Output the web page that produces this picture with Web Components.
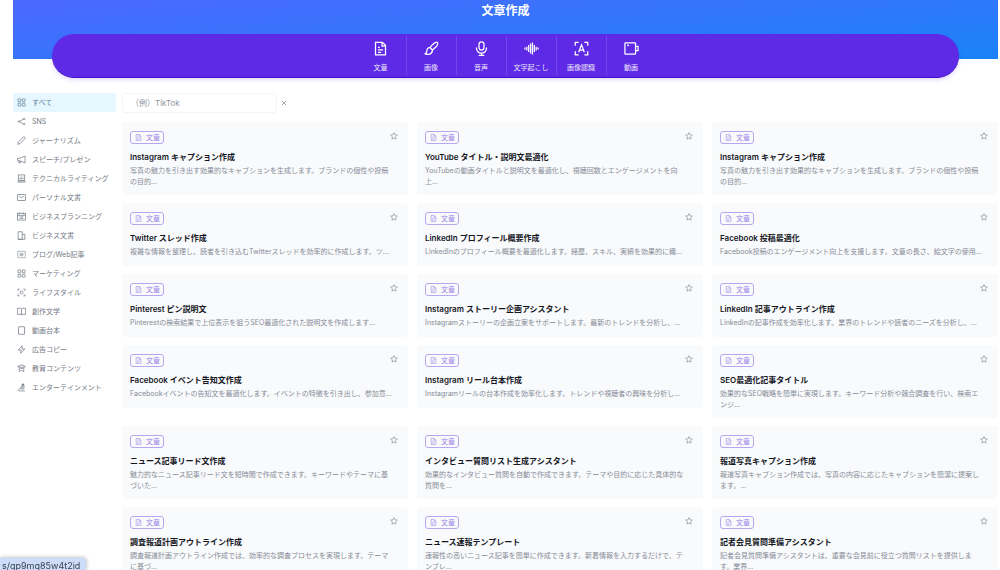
<!DOCTYPE html>
<html lang="ja">
<head>
<meta charset="utf-8">
<meta name="viewport" content="width=device-width, initial-scale=1">
<title>文章作成</title>
<style>
  html { scrollbar-width: none; background: #fff; }
  body { margin: 0; font-family: Inter, "Noto Sans CJK JP", sans-serif; font-size: 7px; line-height: 11px; color: #1c1f2b; }
</style>
</head>
<body>
<template-app></template-app>

<script>
const ICONS = {
  doc: '<path d="M4 2h11l5 5v15H4z"/><path d="M14.500 2v6H20M8 10h3M8 14h8M8 18h5"/>',
  brush: '<path d="M21.500 2.500c-1.500-1.500-5 .5-7.500 3l-4.500 5 4 4 5-4.500c2.500-2.500 4.500-6 3-7.500z"/><path d="M9.500 10.500C6 10.500 4.500 13 4.500 16c0 2-1 3.500-2.500 4.500 4 1.500 11.500 1.500 11.500-6"/>',
  mic: '<rect x="8" y="1.500" width="8" height="13" rx="4"/><path d="M4 10.500v1a8 8 0 0 0 16 0v-1M12 19.500V23M7.500 23h9"/>',
  wave: '<path d="M1.500 10.500v3M4.500 9v6M7.500 6.500v11M10.500 4v16M13.500 2.500v19M16.500 6.500v11M19.500 9v6M22.500 10.500v3"/>',
  scan: '<path d="M2 7.500V2h5.500M16.500 2H22v5.500M22 16.500V22h-5.500M7.500 22H2v-5.500M7.500 18L12 6l4.500 12M9 14.500h6"/>',
  video: '<rect x="1.500" y="3" width="17" height="18" rx="1"/><path d="M18.500 8.500h4v7h-4M5 7h3"/>',
  grid: '<rect x="2.500" y="2.500" width="7.500" height="7.500" rx="1"/><rect x="14" y="2.500" width="7.500" height="7.500" rx="1"/><rect x="2.500" y="14" width="7.500" height="7.500" rx="1"/><rect x="14" y="14" width="7.500" height="7.500" rx="1"/>',
  share: '<circle cx="5" cy="12" r="2"/><circle cx="19" cy="5" r="2"/><circle cx="19" cy="19" r="2"/><path d="M7 11L17 6M7 13l10 5"/>',
  pencil: '<path d="M2 22l1.500-6L17 2.500c2-1.500 6 2 4.500 4.500L8 20.500z"/>',
  horn: '<path d="M1.500 8.500H8L21.500 3v18L8 15.500H1.500zM5 15.500V21h4v-5"/>',
  laptop: '<rect x="3.500" y="2.500" width="17" height="14"/><path d="M1 21.500h22M2 18.500h20M8 7v2M12 7v2M16 7v2M7 12h10"/>',
  mail: '<rect x="1.500" y="4" width="21" height="16" rx="1"/><path d="M6 8.500l6 4.500 6-4.500"/>',
  calendar: '<rect x="1.500" y="3.500" width="21" height="18"/><path d="M1.500 9h21M7 1v5M17 1v5M7 13h10M7 17h10"/>',
  building: '<path d="M3 22V2h11v20zM14 9h7v13H3"/>',
  news: '<path d="M2 3.500h20v17H2z" opacity=".7"/><path d="M7 9h10M7 12h10M7 15h10" stroke-width="1.500"/>',
  focus: '<path d="M2.500 7.500V3H7M17 3h4.500v4.500M21.500 16.500V21H17M7 21H2.500v-4.500"/><circle cx="12" cy="12" r="4"/>',
  book: '<path d="M1 3.500h9l2 1.500 2-1.500h9v16h-9L12 21l-2-1.500H1zM12 5v16"/>',
  page: '<rect x="4" y="2" width="16" height="20" rx="1"/>',
  bolt: '<path d="M14 2L3.500 13.500H11L9.500 22 21 10.500h-7.500z"/>',
  school: '<path d="M1.500 6.500L12 2.500l10.500 4-3.500 2H5zM6 9v11l6-3 6 3V9M8.500 12h7"/>',
  fun: '<path d="M2 21l9-9M5 21h16M15 4v9M10 12l5-8 4 3-1 9-8-1z"/><circle cx="16" cy="4" r="2" fill="currentColor"/>',
  star: '<path d="M12 2l3 6.500 7 .8-5.200 4.900 1.400 7.100L12 17.800l-6.200 3.500 1.400-7.100L2 9.300l7-.8z"/>',
  close: '<path d="M3 3l18 18M21 3L3 21"/>'
};

const TOOLS = [
  ['doc', '文章'], ['brush', '画像'], ['mic', '音声'],
  ['wave', '文字起こし'], ['scan', '画像認識'], ['video', '動画']
];

const CATEGORIES = [
  ['grid', 'すべて'], ['share', 'SNS'], ['pencil', 'ジャーナリズム'], ['horn', 'スピーチ/プレゼン'],
  ['laptop', 'テクニカルライティング'], ['mail', 'パーソナル文書'], ['calendar', 'ビジネスプランニング'],
  ['building', 'ビジネス文書'], ['news', 'ブログ/Web記事'], ['grid', 'マーケティング'],
  ['focus', 'ライフスタイル'], ['book', '創作文学'], ['page', '動画台本'],
  ['bolt', '広告コピー'], ['school', '教育コンテンツ'], ['fun', 'エンターテインメント']
];

const TEMPLATES = [
  ['Instagram キャプション作成', '写真の魅力を引き出す効果的なキャプションを生成します。ブランドの個性や投稿の目的...'],
  ['YouTube タイトル・説明文最適化', 'YouTubeの動画タイトルと説明文を最適化し、視聴回数とエンゲージメントを向上...'],
  ['Instagram キャプション作成', '写真の魅力を引き出す効果的なキャプションを生成します。ブランドの個性や投稿の目的...'],
  ['Twitter スレッド作成', '複雑な情報を整理し、読者を引き込むTwitterスレッドを効率的に作成します。ツ...'],
  ['LinkedIn プロフィール概要作成', 'LinkedInのプロフィール概要を最適化します。経歴、スキル、実績を効果的に織...'],
  ['Facebook 投稿最適化', 'Facebook投稿のエンゲージメント向上を支援します。文章の長さ、絵文字の使用...'],
  ['Pinterest ピン説明文', 'Pinterestの検索結果で上位表示を狙うSEO最適化された説明文を作成します...'],
  ['Instagram ストーリー企画アシスタント', 'Instagramストーリーの企画立案をサポートします。最新のトレンドを分析し、...'],
  ['LinkedIn 記事アウトライン作成', 'LinkedInの記事作成を効率化します。業界のトレンドや読者のニーズを分析し、...'],
  ['Facebook イベント告知文作成', 'Facebookイベントの告知文を最適化します。イベントの特徴を引き出し、参加意...'],
  ['Instagram リール台本作成', 'Instagramリールの台本作成を効率化します。トレンドや視聴者の興味を分析し...'],
  ['SEO最適化記事タイトル', '効果的なSEO戦略を簡単に実現します。キーワード分析や競合調査を行い、検索エンジ...'],
  ['ニュース記事リード文作成', '魅力的なニュース記事リード文を短時間で作成できます。キーワードやテーマに基づいた...'],
  ['インタビュー質問リスト生成アシスタント', '効果的なインタビュー質問を自動で作成できます。テーマや目的に応じた具体的な質問を...'],
  ['報道写真キャプション作成', '報道写真キャプション作成では、写真の内容に応じたキャプションを簡潔に提案します。...'],
  ['調査報道計画アウトライン作成', '調査報道計画アウトライン作成では、効率的な調査プロセスを実現します。テーマに基づ...'],
  ['ニュース速報テンプレート', '速報性の高いニュース記事を簡単に作成できます。新着情報を入力するだけで、テンプレ...'],
  ['記者会見質問準備アシスタント', '記者会見質問準備アシスタントは、重要な会見前に役立つ質問リストを提供します。業界...']
];

function define(name, render) {
  customElements.define(name, class extends HTMLElement {
    connectedCallback() {
      if (this.shadowRoot) return;
      this.attachShadow({ mode: 'open' }).innerHTML = render(this);
    }
  });
}

define('app-icon', el => `
  <style>
    :host { display: inline-flex; flex: none; width: var(--icon-size, 8px); height: var(--icon-size, 8px); }
    svg { width: 100%; height: 100%; fill: none; stroke: currentColor; stroke-width: var(--icon-stroke, 2); }
  </style>
  <svg viewBox="0 0 24 24" aria-hidden="true">${ICONS[el.getAttribute('name')]}</svg>`);

define('page-hero', () => `
  <style>
    :host { display: block; height: 59px; background: linear-gradient(175deg, #4d69ff, #1983f8); }
    h1 { margin: 0; padding-top: 2px; color: #fff; font-size: 12px; line-height: 18px; font-weight: 700; text-align: center; }
  </style>
  <h1><slot></slot></h1>`);

define('tool-tab', el => `
  <style>
    :host { display: block; width: 50px; box-sizing: border-box; }
    :host(:not(:first-of-type)) { border-left: 1px solid #7545ec; }
    a { display: flex; flex-direction: column; align-items: center; gap: 6px; padding-top: 5px; height: 34px;
        color: #fff; text-decoration: none; white-space: nowrap; --icon-size: 15px; }
    span { color: #efe8ff; }
  </style>
  <a href="#"><app-icon name="${el.getAttribute('icon')}"></app-icon><span><slot></slot></span></a>`);

define('tool-bar', () => `
  <style>
    :host { display: block; position: relative; margin: -25px 39px 0; height: 44px; box-sizing: border-box; border-radius: 22px;
            background: #5e2ae5; border-bottom: 1px solid #3d10c9; box-shadow: 0 2px 4px rgba(94, 42, 229, .18); }
    nav { display: flex; justify-content: center; padding-top: 2px; }
  </style>
  <nav aria-label="ツール"><slot></slot></nav>`);

define('category-item', el => `
  <style>
    :host { display: block; }
    a { display: flex; align-items: center; gap: 6px; height: 19px; padding-left: 4px; border-radius: 3px;
        color: #747b86; text-decoration: none; white-space: nowrap; --icon-size: 9px; --icon-stroke: 2; }
    :host([active]) a { background: #e6f7ff; color: #64849a; }
  </style>
  <a href="#"><app-icon name="${el.getAttribute('icon')}"></app-icon><slot></slot></a>`);

define('category-list', () => `
  <style>:host { display: block; }</style>
  <nav aria-label="カテゴリー"><slot></slot></nav>`);

define('search-box', () => `
  <style>
    :host { display: flex; align-items: center; gap: 1px; }
    input { box-sizing: border-box; width: 155px; height: 20px; margin: 0; padding: 0 8px; border: 1px solid #f4f5f7; border-radius: 3px;
            background: #fff; font: inherit; font-size: 8px; color: #1c1f2b; }
    input::placeholder { color: #8f96a3; opacity: 1; }
    button { display: flex; padding: 3px; border: 0; background: none; color: #8d939e; --icon-size: 6px; --icon-stroke: 3; }
  </style>
  <input type="text" aria-label="検索" placeholder="（例）TikTok">
  <button type="button" aria-label="クリア"><app-icon name="close"></app-icon></button>`);

define('template-card', () => `
  <style>
    :host { display: block; box-sizing: border-box; min-height: 63px; padding: 9px 8px 8px; border-radius: 3px; background: #f9fafc; }
    header { display: flex; align-items: flex-start; justify-content: space-between; }
    .badge { display: flex; align-items: center; gap: 4px; box-sizing: border-box; width: 34px; height: 13px; padding: 0 4px;
             border: 1px solid #b9a6ee; border-radius: 3px; color: #9c83e6; --icon-size: 7px; white-space: nowrap; }
    button { display: flex; margin: 0; padding: 1px 2px; border: 0; background: none; color: #858b96; --icon-size: 8px; }
    h2 { margin: 7px 0 2px; font-size: 8px; line-height: 12px; font-weight: 600; color: #15171f; }
    p { margin: 0; padding-right: 6px; color: #868c98; }
  </style>
  <header>
    <span class="badge"><app-icon name="doc"></app-icon>文章</span>
    <button type="button" aria-label="お気に入り"><app-icon name="star"></app-icon></button>
  </header>
  <h2><slot name="title"></slot></h2>
  <p><slot></slot></p>`);

define('link-status', () => `
  <style>
    :host { display: block; position: fixed; left: 0; bottom: 0; height: 12px; padding: 0 6px 0 2px; overflow: hidden; box-sizing: border-box;
            border-top-right-radius: 3px; background: #cddcf8; color: #3b4250; font-size: 9px; line-height: 16px;
            box-shadow: 0 0 4px rgba(0, 0, 0, .35); }
  </style>
  <slot></slot>`);

define('template-app', () => `
  <style>
    :host { display: block; padding: 0 2px 8px 13px; }
    .body { display: grid; grid-template-columns: 103px minmax(0, 1fr); column-gap: 6px; margin-top: 15px; align-items: start; }
    .cards { display: grid; grid-template-columns: repeat(3, minmax(0, 1fr)); gap: 8px 9px; align-items: start; margin-top: 9px; }
  </style>
  <page-hero>文章作成</page-hero>
  <tool-bar>${TOOLS.map(([i, t]) => `<tool-tab icon="${i}">${t}</tool-tab>`).join('')}</tool-bar>
  <div class="body">
    <category-list>${CATEGORIES.map(([i, t], n) => `<category-item icon="${i}"${n ? '' : ' active'}>${t}</category-item>`).join('')}</category-list>
    <main>
      <search-box></search-box>
      <div class="cards">${TEMPLATES.map(([t, d]) => `<template-card><span slot="title">${t}</span>${d}</template-card>`).join('')}</div>
    </main>
  </div>
  <link-status>s/qp9mq85w4t2id</link-status>`);
</script>
</body>
</html>
